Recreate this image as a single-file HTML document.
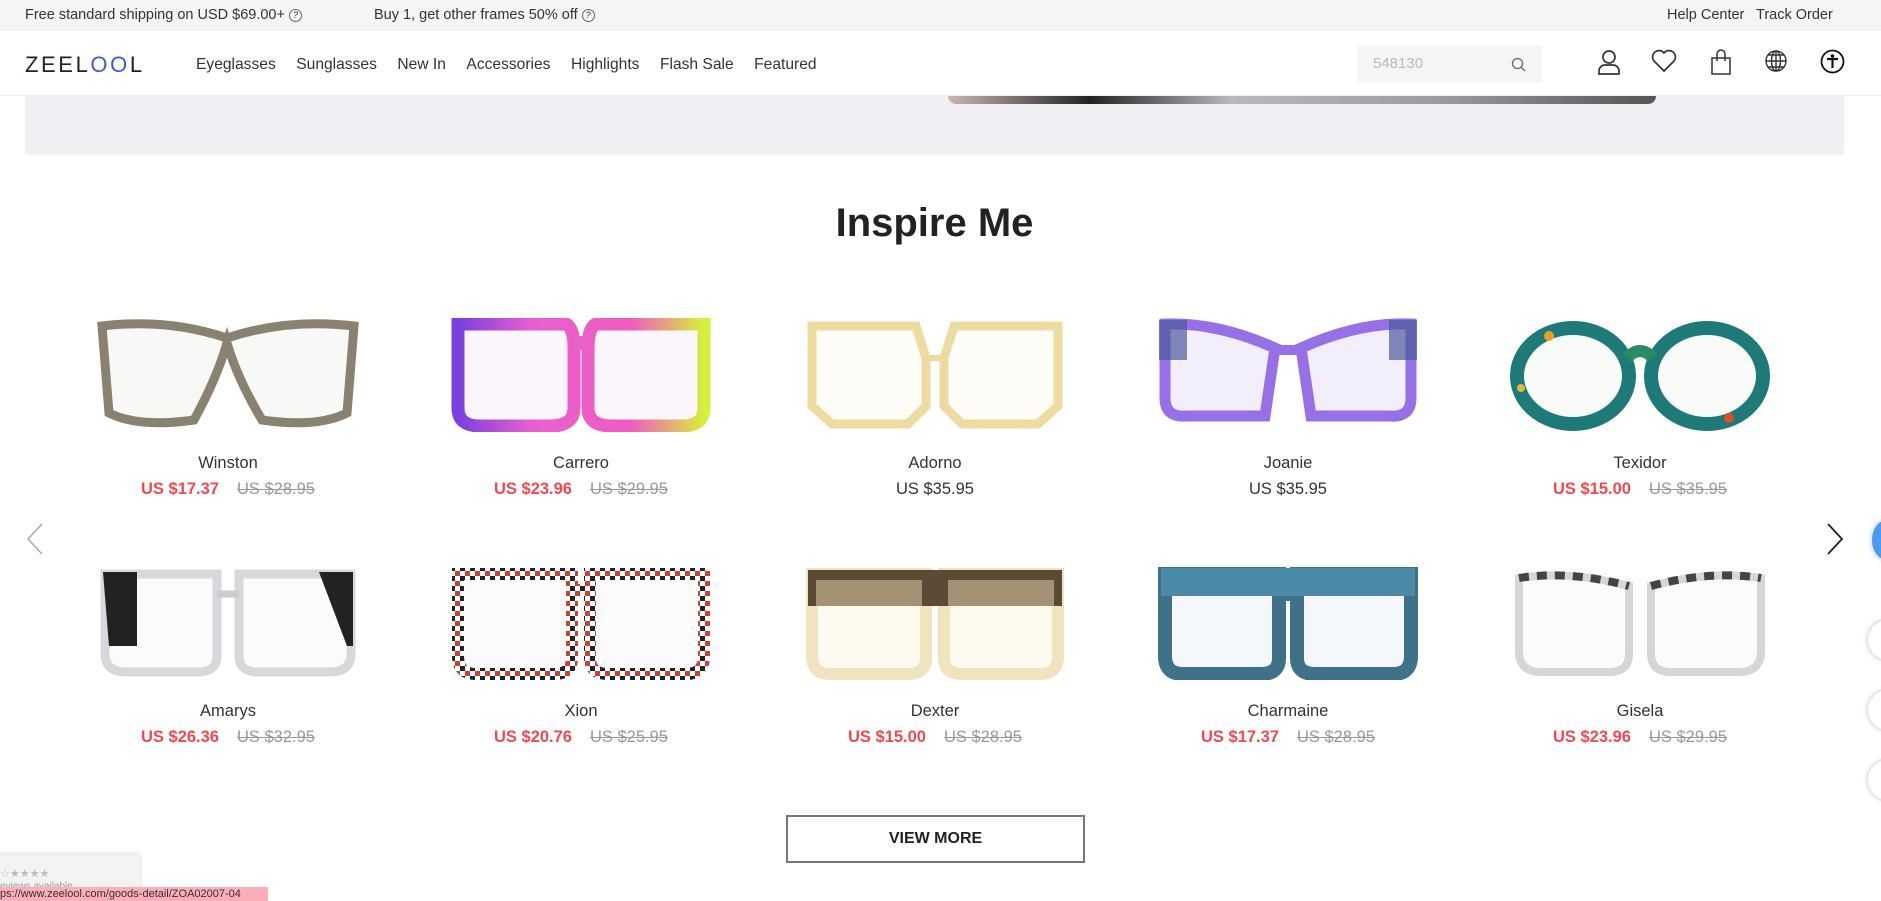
<!DOCTYPE html>
<html><head><meta charset="utf-8"><style>
*{margin:0;padding:0;box-sizing:border-box}
body{width:1881px;height:901px;overflow:hidden;background:#fff;font-family:"Liberation Sans",sans-serif;color:#333;position:relative}
.top{height:31px;background:#f4f5f7;font-size:14.5px;color:#333;position:relative}
.top span{position:absolute;top:7px}
.q{display:inline-block;width:13px;height:13px;border:1px solid #666;border-radius:50%;font-size:9px;text-align:center;line-height:11px;margin-left:4px;vertical-align:1px}
.nav{height:65px;position:relative;border-bottom:1px solid #eee}
.logo{position:absolute;left:25px;top:21px;font-size:22px;letter-spacing:2.6px;color:#1b1f3b;font-weight:500}
.logo b{color:#3c5be0;font-weight:500}
.menu{position:absolute;left:196px;top:25px;font-size:15.6px;color:#333}
.menu span{margin-right:20.5px}
.search{position:absolute;left:1357px;top:14px;width:185px;height:38px;background:#f4f5f7;color:#bbb;font-size:15px;padding:10px 16px}
.ic{position:absolute;top:18px}
.banner{position:absolute;left:25px;top:96px;width:1819px;height:59px;background:#efeff4}
.banner .img{position:absolute;left:923px;top:0;width:708px;height:8px;background:linear-gradient(90deg,#c9b7b7,#222 20%,#b8b8c0 40%,#9a9aa2 70%,#555);border-radius:0 0 60px 60px}
h1{position:absolute;top:201px;width:1881px;text-align:center;font-size:40px;font-weight:bold;color:#222;left:-6px}
.p{position:absolute;width:340px;text-align:center}
.p svg{display:block;margin:0 auto}
.nm{font-size:16.5px;color:#333;margin-top:22px}
.pr{font-size:16.5px;margin-top:7px}
.pr .r{color:#f5474f;font-weight:bold;margin-right:18px}
.pr .o{color:#999;text-decoration:line-through}
.arrow{position:absolute;top:522px}
.vm{position:absolute;left:786px;top:815px;width:299px;height:48px;border:2px solid #777;text-align:center;line-height:44px;font-weight:bold;font-size:16px;color:#222}
.rev{position:absolute;left:0;top:854px;width:140px;height:47px;background:#f3f3f3;box-shadow:0 0 4px #ccc;font-size:11px;color:#bbb;padding:13px 0 0 0}
.url{position:absolute;left:0;top:887px;width:268px;height:14px;background:#fcadb8;font-size:11px;color:#333;padding-left:0;line-height:14px;white-space:nowrap;overflow:hidden}
.circ{position:absolute;left:1868px;width:40px;height:40px;border-radius:50%;background:#fff;box-shadow:0 0 6px #bbb}
</style></head><body>
<div class="top"><span style="left:25px">Free standard shipping on USD $69.00+<i class="q">?</i></span><span style="left:374px">Buy 1, get other frames 50% off<i class="q">?</i></span><span style="left:1667px">Help Center</span><span style="left:1756px">Track Order</span></div>
<div class="nav">
<div class="logo">ZEEL<b>OO</b>L</div>
<div class="menu"><span>Eyeglasses</span><span>Sunglasses</span><span>New In</span><span>Accessories</span><span>Highlights</span><span>Flash Sale</span><span>Featured</span></div>
<div class="search">548130<svg style="position:absolute;right:16px;top:12px" width="15" height="15" viewBox="0 0 15 15"><circle cx="6.5" cy="6.5" r="5" fill="none" stroke="#666" stroke-width="1.3"/><path d="M10 10l4 4" stroke="#666" stroke-width="1.3"/></svg></div>
<svg class="ic" style="left:1597px" width="24" height="26" viewBox="0 0 24 26"><circle cx="12" cy="8" r="6" fill="none" stroke="#333" stroke-width="1.7"/><path d="M2 25v-3a6 6 0 0 1 6-6h8a6 6 0 0 1 6 6v3z" fill="none" stroke="#333" stroke-width="1.7"/></svg>
<svg class="ic" style="left:1651px" width="26" height="24" viewBox="0 0 26 24"><path d="M13 22L3 12a6 6 0 0 1 10-8 6 6 0 0 1 10 8z" fill="none" stroke="#333" stroke-width="1.7"/></svg>
<svg class="ic" style="left:1710px" width="22" height="26" viewBox="0 0 22 26"><path d="M2 9h18v16H2z" fill="none" stroke="#333" stroke-width="1.5"/><path d="M7 12V5a4 4 0 0 1 8 0v7" fill="none" stroke="#333" stroke-width="1.5"/></svg>
<svg class="ic" style="left:1764px" width="24" height="24" viewBox="0 0 24 24" fill="none" stroke="#333" stroke-width="1.4"><circle cx="12" cy="12" r="10"/><ellipse cx="12" cy="12" rx="4.5" ry="10"/><path d="M2 12h20M4 6h16M4 18h16M12 2v20"/></svg>
<svg class="ic" style="left:1820px" width="25" height="25" viewBox="0 0 25 25"><circle cx="12.5" cy="12.5" r="11" fill="none" stroke="#111" stroke-width="1.8"/><circle cx="12.5" cy="7" r="1.8" fill="#111"/><path d="M7 10h11M12.5 10v9" stroke="#111" stroke-width="2.2"/></svg>
</div>
<div class="banner"><div class="img"></div></div>
<h1>Inspire Me</h1>

<svg class="arrow" style="left:26px" width="18" height="34" viewBox="0 0 18 34"><path d="M16 2L2 17l14 15" fill="none" stroke="#aaa" stroke-width="1.5"/></svg>
<svg class="arrow" style="left:1826px" width="18" height="34" viewBox="0 0 18 34"><path d="M2 2l14 15L2 32" fill="none" stroke="#222" stroke-width="1.8"/></svg>

<div class="p" style="left:58px;top:318px"><svg width="262" height="114" viewBox="0 0 262 114"><path d="M5 8Q70 0 130 20Q190 0 257 8L250 95Q220 110 165 102Q140 60 130 25Q120 60 97 102Q42 110 12 95Z" fill="#f8f8f6" stroke="#8a8270" stroke-width="9"/><path d="M130 25L130 40" stroke="#8a8270" stroke-width="8"/></svg><div class="nm">Winston</div><div class="pr"><span class="r">US $17.37</span><span class="o">US $28.95</span></div></div>
<div class="p" style="left:411px;top:318px"><svg width="262" height="114" viewBox="0 0 262 114"><defs><linearGradient id="g1"><stop offset="0" stop-color="#7a3fe0"/><stop offset=".3" stop-color="#e860d0"/><stop offset=".7" stop-color="#ef5cc0"/><stop offset="1" stop-color="#d8f03a"/></linearGradient></defs><path d="M8 6H116Q124 10 124 30V90Q124 108 100 108H30Q8 108 8 90Z M138 30Q138 10 146 6H254V90Q254 108 232 108H162Q138 108 138 90Z" fill="#fbf6fb" stroke="url(#g1)" stroke-width="13"/><path d="M124 25H138" stroke="#ea62c6" stroke-width="14"/></svg><div class="nm">Carrero</div><div class="pr"><span class="r">US $23.96</span><span class="o">US $29.95</span></div></div>
<div class="p" style="left:765px;top:318px"><svg width="262" height="114" viewBox="0 0 262 114"><path d="M8 8H112L122 40V88L104 106H28L8 88Z M140 40L150 8H254V88L234 106H158L140 88Z" fill="#fdfcf7" stroke="#eedba0" stroke-width="9"/><path d="M122 40H140" stroke="#eedba0" stroke-width="6"/></svg><div class="nm">Adorno</div><div class="pr">US $35.95</div></div>
<div class="p" style="left:1118px;top:318px"><svg width="262" height="114" viewBox="0 0 262 114"><path d="M8 6Q60 4 118 30L108 98H30Q8 100 8 80Z M144 30Q202 4 254 6V80Q254 100 232 98H154Z" fill="#f3eefc" stroke="#9770e8" stroke-width="11"/><path d="M118 32H144" stroke="#9770e8" stroke-width="10"/><rect x="2" y="2" width="28" height="40" fill="#4a5a9a" opacity=".7"/><rect x="232" y="2" width="28" height="40" fill="#4a5a9a" opacity=".7"/></svg><div class="nm">Joanie</div><div class="pr">US $35.95</div></div>
<div class="p" style="left:1470px;top:318px"><svg width="262" height="114" viewBox="0 0 262 114"><ellipse cx="64" cy="58" rx="56" ry="48" fill="#f9fbf8" stroke="#1d7a78" stroke-width="14"/><ellipse cx="198" cy="58" rx="56" ry="48" fill="#f9fbf8" stroke="#1d7a78" stroke-width="14"/><path d="M118 40Q131 26 144 40" fill="none" stroke="#2b8a66" stroke-width="12"/><circle cx="40" cy="18" r="5" fill="#f0a020"/><circle cx="220" cy="100" r="5" fill="#e05020"/><circle cx="12" cy="70" r="4" fill="#d8c030"/></svg><div class="nm">Texidor</div><div class="pr"><span class="r">US $15.00</span><span class="o">US $35.95</span></div></div>

<div class="p" style="left:58px;top:566px"><svg width="262" height="114" viewBox="0 0 262 114"><path d="M8 8H120V90Q120 106 100 106H30Q8 106 8 88Z M142 8H254V88Q254 106 232 106H162Q142 106 142 90Z" fill="#fbfbfb" stroke="#d8d8dc" stroke-width="9"/><path d="M6 6H40V80H12Z M222 6H256V80H250Z" fill="#222"/><path d="M120 28H142" stroke="#ccc" stroke-width="7"/></svg><div class="nm">Amarys</div><div class="pr"><span class="r">US $26.36</span><span class="o">US $32.95</span></div></div>
<div class="p" style="left:411px;top:566px"><svg width="262" height="114" viewBox="0 0 262 114"><defs><pattern id="ch" width="10" height="10" patternUnits="userSpaceOnUse"><rect width="10" height="10" fill="#fff"/><rect width="5" height="5" fill="#222"/><rect x="5" y="5" width="5" height="5" fill="#d04030"/></pattern></defs><path d="M8 8H122V92Q122 108 104 108H26Q8 108 8 90Z M140 8H254V90Q254 108 236 108H158Q140 108 140 92Z" fill="#fbfbfb" stroke="url(#ch)" stroke-width="12"/><path d="M122 24H140" stroke="url(#ch)" stroke-width="12"/></svg><div class="nm">Xion</div><div class="pr"><span class="r">US $20.76</span><span class="o">US $25.95</span></div></div>
<div class="p" style="left:765px;top:566px"><svg width="262" height="114" viewBox="0 0 262 114"><path d="M8 8H122V92Q122 108 104 108H26Q8 108 8 90Z M140 8H254V90Q254 108 236 108H158Q140 108 140 92Z" fill="#fdfaf0" stroke="#efe4bd" stroke-width="12"/><path d="M4 4H258V40H4Z" fill="#5a4a36"/><path d="M12 14H118V40H12Z M144 14H250V40H144Z" fill="#e8dcb0" opacity=".5"/></svg><div class="nm">Dexter</div><div class="pr"><span class="r">US $15.00</span><span class="o">US $28.95</span></div></div>
<div class="p" style="left:1118px;top:566px"><svg width="262" height="114" viewBox="0 0 262 114"><path d="M8 8H122V92Q122 108 104 108H26Q8 108 8 90Z M140 8H254V90Q254 108 236 108H158Q140 108 140 92Z" fill="#f4f8fa" stroke="#3f7189" stroke-width="14"/><path d="M122 28H140" stroke="#3f7189" stroke-width="14"/><path d="M4 2H258V30H4Z" fill="#4a8aa6"/></svg><div class="nm">Charmaine</div><div class="pr"><span class="r">US $17.37</span><span class="o">US $28.95</span></div></div>
<div class="p" style="left:1470px;top:566px"><svg width="262" height="114" viewBox="0 0 262 114"><path d="M10 12Q60 4 120 20V88Q120 106 100 106H32Q12 106 10 88Z M142 20Q202 4 252 12V88Q250 106 230 106H162Q142 106 142 88Z" fill="#fbfbfb" stroke="#d6d6d6" stroke-width="8"/><path d="M10 12Q60 4 120 20 M142 20Q202 4 252 12" fill="none" stroke="#444" stroke-width="8" stroke-dasharray="10 8"/></svg><div class="nm">Gisela</div><div class="pr"><span class="r">US $23.96</span><span class="o">US $29.95</span></div></div>

<div class="vm">VIEW MORE</div>
<div class="rev">☆★★★★<br><span style="font-size:10px;color:#999">eviews available</span></div>
<div class="url">ps://www.zeelool.com/goods-detail/ZOA02007-04</div>
<div class="circ" style="top:520px;background:#4a9af0;width:30px;left:1872px"></div>
<div class="circ" style="top:620px"></div>
<div class="circ" style="top:690px"></div>
<div class="circ" style="top:760px"></div>
</body></html>
